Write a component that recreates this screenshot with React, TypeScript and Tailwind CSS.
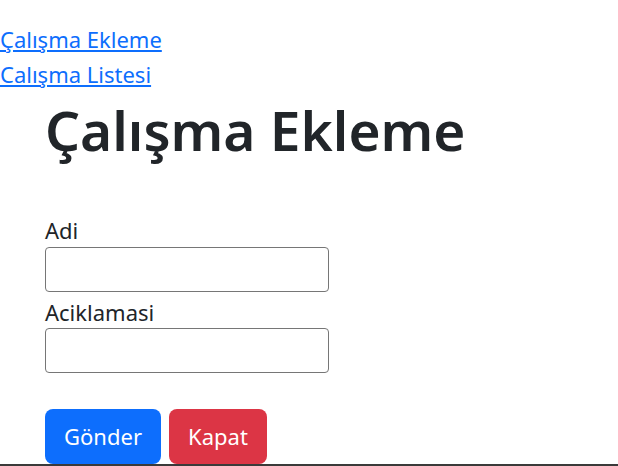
export default function App() {
  return (
    <div className="flex flex-col min-h-[466px] bg-white text-[#212529] font-['Noto_Sans',sans-serif]">
      {/* Top nav links */}
      <div className="flex flex-col items-start pt-[22px]">
        <a href="#" className="text-[22px] leading-[35px] text-[#0d6efd] underline">Çalışma Ekleme</a>
        <a href="#" className="text-[22px] leading-[35px] text-[#0d6efd] underline">Calışma Listesi</a>
      </div>

      <div className="flex flex-col items-start px-[45px]">
        <h1 className="text-[55px] font-semibold leading-[54px] mt-[11px] mb-[53px]">Çalışma Ekleme</h1>

        <label className="text-[22px] leading-[30px] pt-[5px] pb-[2px]">Adi</label>
        <input className="w-[284px] h-[45px] border border-[#767676] rounded-[4px] outline-none" />

        <label className="text-[22px] leading-[30px] pt-[5px] pb-[1px]">Aciklamasi</label>
        <input className="w-[284px] h-[45px] border border-[#767676] rounded-[4px] outline-none" />

        <div className="flex gap-[8px] mt-[36px]">
          <button className="w-[116px] h-[55px] rounded-[8px] bg-[#0d6efd] text-white text-[22px]">Gönder</button>
          <button className="w-[98px] h-[55px] rounded-[8px] bg-[#dc3545] text-white text-[22px]">Kapat</button>
        </div>
      </div>
      <div className="h-[2px] bg-[#3a3a3a] w-full" />
    </div>
  );
}
